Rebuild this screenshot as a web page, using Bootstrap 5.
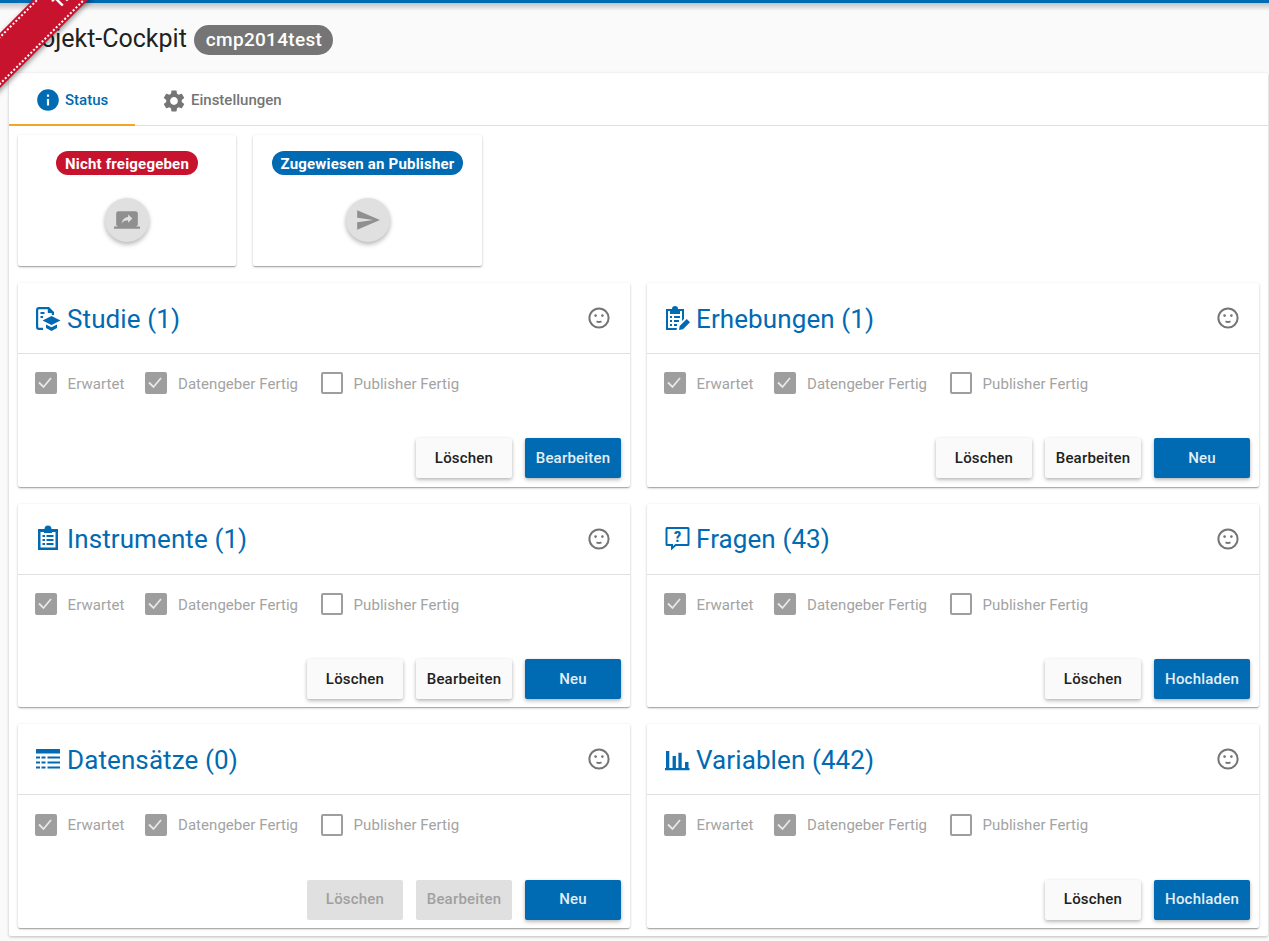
<!DOCTYPE html>
<html lang="de">
<head>
    <meta charset="UTF-8">
    <meta name="viewport" content="width=device-width, initial-scale=1.0">
    <title>Projekt-Cockpit</title>
    <link href="https://cdn.jsdelivr.net/npm/bootstrap@5.3.2/dist/css/bootstrap.min.css" rel="stylesheet">
    <style>
        html, body { height: 941px; overflow: hidden; }
        body {
            font-family: Roboto, "Liberation Sans", sans-serif;
            background-color: #fafafa;
            color: #212121;
            border-top: 3px solid #006ab2;
        }
        .top-shadow {
            height: 8px;
            margin-bottom: -8px;
            background: linear-gradient(rgba(0, 0, 0, .22), rgba(0, 0, 0, 0));
        }
        /* ribbon in the corner */
        .test-ribbon {
            position: absolute;
            left: -81px;
            top: -28px;
            width: 300px;
            height: 39px;
            line-height: 39px;
            transform: rotate(-45deg);
            background: #c8132f;
            color: #fff;
            font-size: 16px;
            font-weight: 700;
            text-align: center;
            z-index: 10;
            box-shadow: 0 2px 5px rgba(0, 0, 0, .4);
        }
        .test-ribbon::before {
            content: "";
            position: absolute;
            left: 0;
            right: 0;
            top: 2px;
            bottom: 2px;
            border-top: 2px dotted #fff;
            border-bottom: 2px dotted #fff;
        }
        .page-head { height: 70px; padding: 2px 0 0 17px; gap: 7px; }
        .page-title { font-size: 25px; font-weight: 400; margin: 0; }
        .project-pill {
            background: #757575;
            color: #fff;
            font-size: 19px;
            font-weight: 500;
            letter-spacing: .3px;
            line-height: 30px;
            height: 30px;
            padding: 0 11px 0 12px;
            border-radius: 15px;
            margin-top: 1px;
        }
        .sheet {
            margin: 0 1px 0 9px;
            height: 863px;
            background: #fff;
            box-shadow: 0 1px 3px rgba(0, 0, 0, .25);
            border-radius: 2px;
        }
        .tab-bar { height: 53px; border-bottom: 1px solid #e0e0e0; }
        .tab-item {
            display: flex;
            align-items: center;
            font-size: 15px;
            font-weight: 500;
            color: #757575;
            text-decoration: none;
            height: 53px;
            padding-top: 2px;
        }
        .tab-item svg { width: 26px; height: 26px; fill: currentColor; margin-right: 4px; }
        .tab-active { width: 126px; padding-left: 26px; padding-top: 3px; color: #006ab2; border-bottom: 2px solid #f5a623; }
        .tab-other { padding-left: 26px; }
        .sheet-body { padding: 9px 9px 0 9px; }
        .state-tile {
            height: 131px;
            background: #fff;
            border-radius: 2px;
            box-shadow: 0 1px 3px rgba(0, 0, 0, .2), 0 1px 1px rgba(0, 0, 0, .14), 0 2px 1px -1px rgba(0, 0, 0, .12);
            padding-top: 16px;
        }
        .tile-first { width: 218px; margin-right: 17px; }
        .tile-second { width: 229px; }
        .state-pill {
            font-size: 15px;
            font-weight: 700;
            letter-spacing: .2px;
            line-height: 26px;
            height: 24px;
            padding: 0 9px;
            border-radius: 12px;
            color: #fff;
        }
        .pill-red { background: #c8132f; }
        .pill-blue { background: #006ab2; }
        .round-action {
            width: 44px;
            height: 44px;
            margin-top: 23px;
            border: 0;
            border-radius: 50%;
            background: #e0e0e0;
            box-shadow: 0 3px 5px rgba(0, 0, 0, .2), 0 1px 4px rgba(0, 0, 0, .12);
        }
        .round-action svg { width: 26px; height: 26px; fill: #8f8f8f; }
        .panel-row { --bs-gutter-x: 17px; --bs-gutter-y: 17px; margin-top: 0; }
        .panel-row > * { margin-top: 17px; }
        .panel {
            height: 203.7px;
            background: #fff;
            border-radius: 2px;
            box-shadow: 0 1px 3px rgba(0, 0, 0, .2), 0 1px 1px rgba(0, 0, 0, .14), 0 2px 1px -1px rgba(0, 0, 0, .12);
        }
        .panel-head {
            height: 71px;
            padding: 0 19px 0 17px;
            border-bottom: 1px solid #e0e0e0;
            color: #006ab2;
        }
        .panel-head h2 { font-size: 26px; font-weight: 400; letter-spacing: .1px; margin: 2px 0 0 6px; line-height: 69px; }
        .panel-icon { width: 26px; height: 26px; fill: #006ab2; flex: none; margin-top: -1px; }
        .mood-icon { width: 24px; height: 24px; fill: none; stroke: #757575; }
        .panel-checks { padding: 18.3px 0 0 17px; }
        .tick {
            display: flex;
            align-items: center;
            font-size: 15px;
            letter-spacing: .05px;
            color: #a3a3a3;
            height: 22px;
        }
        .tick-text { padding-top: 2px; }
        .tick-box {
            width: 22px;
            height: 22px;
            flex: none;
            margin: 0 10.6px 0 0;
            border: 2px solid #9e9e9e;
            border-radius: 2px;
            background-color: #fff;
            appearance: none;
        }
        .tick-box:checked {
            background-color: #9e9e9e;
            background-image: url("data:image/svg+xml,%3csvg xmlns='http://www.w3.org/2000/svg' viewBox='0 0 22 22'%3e%3cpath fill='none' stroke='%23e8e8e8' stroke-width='1.8' d='M4 10.5l4.5 4.5L16 6'/%3e%3c/svg%3e");
            background-position: center;
            background-size: 22px 22px;
            background-repeat: no-repeat;
        }
        .tick-one { width: 110.4px; }
        .tick-two { width: 175.6px; }
        .panel-actions { padding: 44px 9px 0 0; gap: 13px; }
        .act-btn {
            width: 96px;
            height: 40px;
            padding: 0;
            border: 0;
            border-radius: 2px;
            font-size: 15px;
            font-weight: 500;
            letter-spacing: .2px;
            box-shadow: 0 2px 4px rgba(0, 0, 0, .22), 0 1px 3px rgba(0, 0, 0, .1);
        }
        .act-plain { background: #fafafa; color: #212121; }
        .act-main { background: #006ab2; color: #e3eef6; }
        .act-btn:disabled { background: #e0e0e0; color: #a0a0a0; opacity: 1; box-shadow: none; }
    </style>
</head>
<body>
    <svg width="0" height="0" class="position-absolute">
        <symbol id="ic-mood" viewBox="0 0 24 24">
            <circle cx="12" cy="12" r="9.6" stroke-width="2"/>
            <circle cx="8.6" cy="9.6" r="1.3" fill="#757575" stroke="none"/>
            <circle cx="15.4" cy="9.6" r="1.3" fill="#757575" stroke="none"/>
            <path d="M9.5 15.4q2.5 1.2 5 0" stroke-width="1.8"/>
        </symbol>
        <symbol id="ic-study" viewBox="0 0 26 26">
            <path d="M4 2h10l5 5v3h-2.200V8h-4V4.200H4a.8.8 0 0 0-.8.8v17a.8.8 0 0 0 .8.8h4V25H4a3 3 0 0 1-3-3V5a3 3 0 0 1 3-3z"/>
            <path d="M5.500 7h4v2h-4zM5.500 11h2.500v2H5.500z"/>
            <path d="M16.500 11l9 4.500-9 4.500-9-4.500zM11 19.500l5.500 2.700 5.500-2.700v3.500l-5.500 3-5.500-3z"/>
        </symbol>
        <symbol id="ic-survey" viewBox="0 0 26 26">
            <path d="M2 4h6a3 3 0 0 1 6 0h6v10l-2 2V6h-2v3H6V6H4v17h9l-.5 2H2z"/>
            <path d="M6 11h2v2H6zM10 11h6v2h-6zM6 15h2v2H6zM10 15h5v2h-5zM6 19h2v2H6zM10 19h3v2h-3z"/>
            <path d="M15 25l.7-4 7-7 3.300 3.300-7 7z"/>
        </symbol>
        <symbol id="ic-instrument" viewBox="0 0 26 26">
            <path fill-rule="evenodd" d="M3 4h6.500a3.500 3.500 0 0 1 7 0H23v21H3zM5.500 7v15.500h15V7z"/>
            <path d="M9 5h8v3H9zM7.500 10h2.500v2H7.500zM11.500 10h7v2h-7zM7.500 14h2.500v2H7.500zM11.500 14h7v2h-7zM7.500 18h2.500v2H7.500zM11.500 18h7v2h-7z"/>
        </symbol>
        <symbol id="ic-question" viewBox="0 0 26 26">
            <path fill-rule="evenodd" d="M3 2h21a1.500 1.500 0 0 1 1.500 1.500v16A1.500 1.500 0 0 1 24 21H12l-5 4.500V21H3a1.500 1.500 0 0 1-1.500-1.500v-16A1.500 1.500 0 0 1 3 2zM3.500 4v15h5.500v2l2.300-2H23.500V4z"/>
            <text x="13.500" y="16.500" font-family="Roboto, sans-serif" font-size="14" font-weight="900" text-anchor="middle">?</text>
        </symbol>
        <symbol id="ic-table" viewBox="0 0 26 26">
            <path d="M1 3h24v4.500H1zM1 10.500h4v2H1zM6.500 10.500h4v2h-4zM12.500 10.500h12.500v2H12.500zM1 15.500h4v2H1zM6.500 15.500h4v2h-4zM12.500 15.500h12.500v2H12.500zM1 20.500h4v2H1zM6.500 20.500h4v2h-4zM12.500 20.500h12.500v2H12.500z"/>
        </symbol>
        <symbol id="ic-chart" viewBox="0 0 26 26">
            <path d="M1 22h24.500v2.200H1zM2 5h3.300v17H2zM8.600 10h3.300v12H8.600zM14.400 6.700h3.300V22h-3.300zM21 16h3.500v6H21z"/>
        </symbol>
    </svg>

    <div class="top-shadow"></div>
    <div class="test-ribbon">TEST</div>

    <header class="page-head d-flex align-items-center">
        <h1 class="page-title">Projekt-Cockpit</h1>
        <span class="project-pill">cmp2014test</span>
    </header>

    <main class="sheet">
        <nav class="tab-bar d-flex">
            <a class="tab-item tab-active" href="#">
                <svg viewBox="0 0 24 24"><path d="M12 2C6.480 2 2 6.480 2 12s4.480 10 10 10 10-4.480 10-10S17.520 2 12 2zm1 15h-2v-6h2v6zm0-8h-2V7h2v2z"/></svg>
                Status
            </a>
            <a class="tab-item tab-other" href="#">
                <svg viewBox="0 0 24 24"><path d="M19.140 12.940c.04-.3.06-.61.06-.94 0-.32-.02-.64-.07-.94l2.030-1.580c.18-.14.23-.41.12-.61l-1.920-3.320c-.12-.22-.37-.29-.59-.22l-2.390.96c-.5-.38-1.030-.7-1.620-.94l-.36-2.540c-.04-.24-.24-.41-.48-.41h-3.840c-.24 0-.43.17-.47.41l-.36 2.540c-.59.24-1.130.57-1.620.94l-2.390-.96c-.22-.08-.47 0-.59.22L2.740 8.870c-.12.21-.08.47.12.61l2.030 1.580c-.05.3-.09.63-.09.94s.02.64.07.94l-2.030 1.580c-.18.14-.23.41-.12.61l1.920 3.320c.12.22.37.29.59.22l2.390-.96c.5.38 1.030.7 1.620.94l.36 2.540c.05.24.24.41.48.41h3.840c.24 0 .44-.17.47-.41l.36-2.540c.59-.24 1.130-.56 1.620-.94l2.390.96c.22.08.47 0 .59-.22l1.920-3.320c.12-.22.07-.47-.12-.61l-2.010-1.580zM12 15.600c-1.980 0-3.600-1.620-3.600-3.600s1.620-3.600 3.600-3.600 3.600 1.620 3.600 3.600-1.620 3.600-3.600 3.600z"/></svg>
                Einstellungen
            </a>
        </nav>

        <div class="sheet-body">
            <div class="d-flex">
                <div class="state-tile tile-first d-flex flex-column align-items-center">
                    <span class="state-pill pill-red">Nicht freigegeben</span>
                    <button class="round-action d-flex align-items-center justify-content-center" type="button">
                        <svg viewBox="0 0 24 24"><path d="M20 18c1.100 0 1.990-.9 1.990-2L22 6c0-1.110-.9-2-2-2H4c-1.110 0-2 .89-2 2v10c0 1.100.89 2 2 2H0v2h24v-2h-4zm-7-3.530v-2.190c-2.780 0-4.610.85-6 2.720.56-2.670 2.110-5.330 6-5.870V7l4 3.730-4 3.740z"/></svg>
                    </button>
                </div>
                <div class="state-tile tile-second d-flex flex-column align-items-center">
                    <span class="state-pill pill-blue">Zugewiesen an Publisher</span>
                    <button class="round-action d-flex align-items-center justify-content-center" type="button">
                        <svg viewBox="0 0 24 24"><path d="M2.010 21L23 12 2.010 3 2 10l15 2-15 2z"/></svg>
                    </button>
                </div>
            </div>

            <div class="row panel-row">
                <div class="col-6">
                    <section class="panel">
                        <div class="panel-head d-flex align-items-center">
                            <svg class="panel-icon"><use href="#ic-study"/></svg>
                            <h2>Studie (1)</h2>
                            <svg class="mood-icon ms-auto"><use href="#ic-mood"/></svg>
                        </div>
                        <div class="panel-checks d-flex">
                            <label class="tick tick-one"><input class="tick-box" type="checkbox" checked disabled><span class="tick-text">Erwartet</span></label>
                            <label class="tick tick-two"><input class="tick-box" type="checkbox" checked disabled><span class="tick-text">Datengeber Fertig</span></label>
                            <label class="tick"><input class="tick-box" type="checkbox" disabled><span class="tick-text">Publisher Fertig</span></label>
                        </div>
                        <div class="panel-actions d-flex justify-content-end">
                            <button class="btn act-btn act-plain" type="button">Löschen</button>
                            <button class="btn act-btn act-main" type="button">Bearbeiten</button>
                        </div>
                    </section>
                </div>
                <div class="col-6">
                    <section class="panel">
                        <div class="panel-head d-flex align-items-center">
                            <svg class="panel-icon"><use href="#ic-survey"/></svg>
                            <h2>Erhebungen (1)</h2>
                            <svg class="mood-icon ms-auto"><use href="#ic-mood"/></svg>
                        </div>
                        <div class="panel-checks d-flex">
                            <label class="tick tick-one"><input class="tick-box" type="checkbox" checked disabled><span class="tick-text">Erwartet</span></label>
                            <label class="tick tick-two"><input class="tick-box" type="checkbox" checked disabled><span class="tick-text">Datengeber Fertig</span></label>
                            <label class="tick"><input class="tick-box" type="checkbox" disabled><span class="tick-text">Publisher Fertig</span></label>
                        </div>
                        <div class="panel-actions d-flex justify-content-end">
                            <button class="btn act-btn act-plain" type="button">Löschen</button>
                            <button class="btn act-btn act-plain" type="button">Bearbeiten</button>
                            <button class="btn act-btn act-main" type="button">Neu</button>
                        </div>
                    </section>
                </div>
                <div class="col-6">
                    <section class="panel">
                        <div class="panel-head d-flex align-items-center">
                            <svg class="panel-icon"><use href="#ic-instrument"/></svg>
                            <h2>Instrumente (1)</h2>
                            <svg class="mood-icon ms-auto"><use href="#ic-mood"/></svg>
                        </div>
                        <div class="panel-checks d-flex">
                            <label class="tick tick-one"><input class="tick-box" type="checkbox" checked disabled><span class="tick-text">Erwartet</span></label>
                            <label class="tick tick-two"><input class="tick-box" type="checkbox" checked disabled><span class="tick-text">Datengeber Fertig</span></label>
                            <label class="tick"><input class="tick-box" type="checkbox" disabled><span class="tick-text">Publisher Fertig</span></label>
                        </div>
                        <div class="panel-actions d-flex justify-content-end">
                            <button class="btn act-btn act-plain" type="button">Löschen</button>
                            <button class="btn act-btn act-plain" type="button">Bearbeiten</button>
                            <button class="btn act-btn act-main" type="button">Neu</button>
                        </div>
                    </section>
                </div>
                <div class="col-6">
                    <section class="panel">
                        <div class="panel-head d-flex align-items-center">
                            <svg class="panel-icon"><use href="#ic-question"/></svg>
                            <h2>Fragen (43)</h2>
                            <svg class="mood-icon ms-auto"><use href="#ic-mood"/></svg>
                        </div>
                        <div class="panel-checks d-flex">
                            <label class="tick tick-one"><input class="tick-box" type="checkbox" checked disabled><span class="tick-text">Erwartet</span></label>
                            <label class="tick tick-two"><input class="tick-box" type="checkbox" checked disabled><span class="tick-text">Datengeber Fertig</span></label>
                            <label class="tick"><input class="tick-box" type="checkbox" disabled><span class="tick-text">Publisher Fertig</span></label>
                        </div>
                        <div class="panel-actions d-flex justify-content-end">
                            <button class="btn act-btn act-plain" type="button">Löschen</button>
                            <button class="btn act-btn act-main" type="button">Hochladen</button>
                        </div>
                    </section>
                </div>
                <div class="col-6">
                    <section class="panel">
                        <div class="panel-head d-flex align-items-center">
                            <svg class="panel-icon"><use href="#ic-table"/></svg>
                            <h2>Datensätze (0)</h2>
                            <svg class="mood-icon ms-auto"><use href="#ic-mood"/></svg>
                        </div>
                        <div class="panel-checks d-flex">
                            <label class="tick tick-one"><input class="tick-box" type="checkbox" checked disabled><span class="tick-text">Erwartet</span></label>
                            <label class="tick tick-two"><input class="tick-box" type="checkbox" checked disabled><span class="tick-text">Datengeber Fertig</span></label>
                            <label class="tick"><input class="tick-box" type="checkbox" disabled><span class="tick-text">Publisher Fertig</span></label>
                        </div>
                        <div class="panel-actions d-flex justify-content-end">
                            <button class="btn act-btn act-plain" type="button" disabled>Löschen</button>
                            <button class="btn act-btn act-plain" type="button" disabled>Bearbeiten</button>
                            <button class="btn act-btn act-main" type="button">Neu</button>
                        </div>
                    </section>
                </div>
                <div class="col-6">
                    <section class="panel">
                        <div class="panel-head d-flex align-items-center">
                            <svg class="panel-icon"><use href="#ic-chart"/></svg>
                            <h2>Variablen (442)</h2>
                            <svg class="mood-icon ms-auto"><use href="#ic-mood"/></svg>
                        </div>
                        <div class="panel-checks d-flex">
                            <label class="tick tick-one"><input class="tick-box" type="checkbox" checked disabled><span class="tick-text">Erwartet</span></label>
                            <label class="tick tick-two"><input class="tick-box" type="checkbox" checked disabled><span class="tick-text">Datengeber Fertig</span></label>
                            <label class="tick"><input class="tick-box" type="checkbox" disabled><span class="tick-text">Publisher Fertig</span></label>
                        </div>
                        <div class="panel-actions d-flex justify-content-end">
                            <button class="btn act-btn act-plain" type="button">Löschen</button>
                            <button class="btn act-btn act-main" type="button">Hochladen</button>
                        </div>
                    </section>
                </div>
            </div>
        </div>
    </main>
    <script src="https://cdn.jsdelivr.net/npm/bootstrap@5.3.2/dist/js/bootstrap.bundle.min.js"></script>
</body>
</html>
